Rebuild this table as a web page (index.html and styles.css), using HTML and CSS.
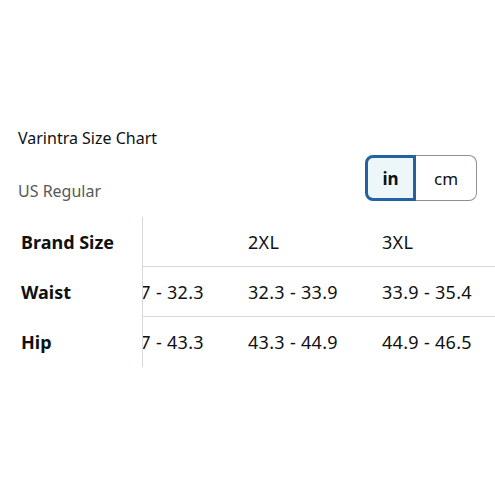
FILE: index.html
```html
<!DOCTYPE html>
<html lang="en">
<head>
<meta charset="utf-8">
<link rel="stylesheet" href="styles.css">
</head>
<body>
<main class="chart">
  <h1 class="title">Varintra Size Chart</h1>
  <div class="subrow">
    <span class="region">US Regular</span>
    <div class="toggle">
      <span class="seg seg-on">in</span>
      <span class="seg seg-off">cm</span>
    </div>
  </div>
  <div class="table">
    <div class="head-col">
      <div class="hcell">Brand Size</div>
      <div class="hcell">Waist</div>
      <div class="hcell">Hip</div>
    </div>
    <div class="scroll">
      <div class="grid">
        <div class="row">
          <div class="cell">XL</div>
          <div class="cell">2XL</div>
          <div class="cell">3XL</div>
        </div>
        <div class="row">
          <div class="cell">30.7 - 32.3</div>
          <div class="cell">32.3 - 33.9</div>
          <div class="cell">33.9 - 35.4</div>
        </div>
        <div class="row row-last">
          <div class="cell">41.7 - 43.3</div>
          <div class="cell">43.3 - 44.9</div>
          <div class="cell">44.9 - 46.5</div>
        </div>
      </div>
    </div>
  </div>
</main>
</body>
</html>
```

FILE: styles.css
```css
html, body {
  margin: 0;
  padding: 0;
  background: #ffffff;
}

body {
  font-family: "Noto Sans", "Open Sans", sans-serif;
  color: #0f1111;
}

.chart {
  width: 495px;
  height: 495px;
  overflow: hidden;
  padding-top: 128px;
  box-sizing: border-box;
}

.title {
  margin: 0 0 0 18px;
  font-size: 16px;
  line-height: 20px;
  font-weight: 400;
  color: #0f1111;
}

.subrow {
  margin-top: 7px;
  display: flex;
  align-items: flex-end;
  justify-content: space-between;
  padding-left: 18px;
  padding-right: 18px;
  height: 46px;
}

.region {
  font-size: 16px;
  line-height: 20px;
  color: #565959;
}

.toggle {
  display: flex;
  height: 46px;
  align-self: flex-start;
}

.seg {
  display: flex;
  align-items: center;
  justify-content: center;
  box-sizing: border-box;
  height: 46px;
  font-size: 17px;
}

.seg-on {
  width: 51px;
  border: 3px solid #2162a1;
  border-radius: 8px 0 0 8px;
  background: #edf7fa;
  font-weight: 700;
  color: #0f1111;
}

.seg-off {
  width: 61px;
  border: 1px solid #8d9096;
  border-left: none;
  border-radius: 0 8px 8px 0;
  color: #0f1111;
}

.table {
  margin-top: 16px;
  display: flex;
}

.head-col {
  width: 142px;
  flex: none;
  border-right: 1px solid #d5d9d9;
}

.hcell {
  height: 50px;
  display: flex;
  align-items: center;
  padding-left: 21px;
  font-size: 18px;
  font-weight: 700;
  color: #0f1111;
}

.scroll {
  flex: 1;
  overflow: hidden;
}

.grid {
  margin-left: -49px;
  width: 402px;
}

.row {
  display: flex;
  height: 50px;
  box-sizing: border-box;
  border-bottom: 1px solid #d5d9d9;
}

.row-last {
  border-bottom: none;
}

.cell {
  width: 134px;
  flex: none;
  padding-left: 20px;
  box-sizing: border-box;
  display: flex;
  align-items: center;
  white-space: nowrap;
  font-size: 18px;
  letter-spacing: 0.3px;
  color: #0f1111;
}
```
